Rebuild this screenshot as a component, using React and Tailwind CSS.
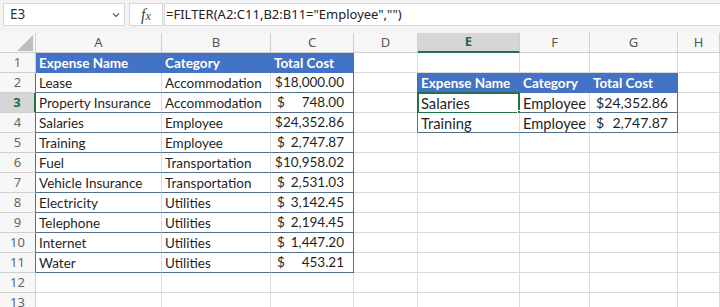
import React from "react";

const UI_FONT = "font-['Noto_Sans',sans-serif]";
const CELL_FONT = "font-['Lato',sans-serif]";

const GRID = "border-[#dadada]";

const COLS = [
    { key: "A", w: "w-[126px]" },
    { key: "B", w: "w-[109px]" },
    { key: "C", w: "w-[83px]" },
    { key: "D", w: "w-[64px]" },
    { key: "E", w: "w-[102px]" },
    { key: "F", w: "w-[70px]" },
    { key: "G", w: "w-[88px]" },
    { key: "H", w: "flex-1" },
];

const expenses = [
    ["Lease", "Accommodation", ["$18,000.00", ""]],
    ["Property Insurance", "Accommodation", ["748.00", "$"]],
    ["Salaries", "Employee", ["$24,352.86", ""]],
    ["Training", "Employee", ["2,747.87", "$"]],
    ["Fuel", "Transportation", ["$10,958.02", ""]],
    ["Vehicle Insurance", "Transportation", ["2,531.03", "$"]],
    ["Electricity", "Utilities", ["3,142.45", "$"]],
    ["Telephone", "Utilities", ["2,194.45", "$"]],
    ["Internet", "Utilities", ["1,447.20", "$"]],
    ["Water", "Utilities", ["453.21", "$"]],
];

const filtered = [
    ["Salaries", "Employee", ["$24,352.86", ""]],
    ["Training", "Employee", ["2,747.87", "$"]],
];

// accounting format: "$" sits left, the amount sits right
const Money = ({ value, size }) =>
    value[1] ? (
        <div className={`flex h-full items-center justify-between pl-[6px] pr-[9px] ${size}`}>
            <span>{value[1]}</span>
            <span>{value[0]}</span>
        </div>
    ) : (
        <div className={`flex h-full items-center justify-end pl-[6px] pr-[9px] ${size}`}>
            <span>{value[0]}</span>
        </div>
    );

// which cell holds what, and how its borders look
const cellInfo = (row, key) => {
    const info = { content: null, header: false, big: false, rb: "", bb: "" };
    const t1 = ["A", "B", "C"].indexOf(key);
    const t2 = ["E", "F", "G"].indexOf(key);

    if (t1 >= 0 && row === 1) {
        info.header = true;
        info.content = ["Expense Name", "Category", "Total Cost"][t1];
        info.rb = t1 === 2 ? "border-r-[#52708a]" : "border-r-[#4472c4]";
        info.bb = "border-b-[#4472c4]";
    } else if (t1 >= 0 && row >= 2 && row <= 11) {
        const item = expenses[row - 2];
        info.content = t1 === 2 ? <Money value={item[2]} size="" /> : item[t1];
        info.rb = t1 === 2 ? "border-r-[#52708a]" : "";
        info.bb = "border-b-[#52708a]";
    }

    if (t2 >= 0 && row === 2) {
        info.header = true;
        info.content = ["Expense Name", "Category", "Total Cost"][t2];
        info.rb = t2 === 2 ? "border-r-[#52708a]" : "border-r-[#4472c4]";
        info.bb = "border-b-[#4472c4]";
    } else if (t2 >= 0 && (row === 3 || row === 4)) {
        const item = filtered[row - 3];
        info.big = true;
        info.content = t2 === 2 ? <Money value={item[2]} size="text-[14.1px]" /> : item[t2];
        info.rb = t2 === 2 ? "border-r-[#52708a]" : "";
        info.bb = "border-b-[#52708a]";
    }

    if (key === "D" && row >= 2 && row <= 4) info.rb = "border-r-[#52708a]";
    return info;
};

const FormulaBar = () => (
    <div className={`h-[33px] shrink-0 bg-[#f3f3f3] pt-[3px] pl-[3px] flex ${UI_FONT}`}>
        <div className="w-[122px] h-[23px] bg-white border border-[#d6d6d6] flex items-center justify-between pl-[6px] pr-[4px] text-[13.5px] text-[#333]">
            <span>E3</span>
            <svg width="8" height="6" viewBox="0 0 8 6" className="mt-[1px]">
                <path d="M1 1.5 L4 4.5 L7 1.5" fill="none" stroke="#555" strokeWidth="1.1" />
            </svg>
        </div>
        <div className="ml-[4px] w-[34px] h-[23px] bg-white border border-[#d6d6d6] flex items-center justify-center">
            <span className="font-['Liberation_Serif',serif] italic text-[16px] text-[#444] leading-none">
                f<span className="text-[12px]">x</span>
            </span>
        </div>
        <div className="ml-[1px] flex-1 h-[23px] bg-white border border-[#d6d6d6] border-r-0 flex items-center pl-[1px] text-[13px] text-[#222]">
            =FILTER(A2:C11,B2:B11="Employee","")
        </div>
    </div>
);

const ColumnHeaders = () => (
    <div className={`flex h-[20px] shrink-0 ${UI_FONT}`}>
        <div className="w-[36px] h-full bg-[#f7f7f7] border-r border-b border-[#cfcfcf] relative">
            <svg width="36" height="20" className="absolute left-0 top-0">
                <polygon points="33,2 33,18 17,18" fill="#bdbdbd" />
            </svg>
        </div>
        {COLS.map((col) =>
            col.key === "E" ? (
                <div
                    key={col.key}
                    className={`${col.w} h-full bg-[#d6d6d6] border-r border-[#cfcfcf] border-b-2 border-b-[#217346] flex items-center justify-center text-[13px] font-bold text-[#1e6b41]`}
                >
                    {col.key}
                </div>
            ) : (
                <div
                    key={col.key}
                    className={`${col.w} h-full bg-[#f7f7f7] border-r border-b border-[#cfcfcf] flex items-center justify-center text-[13px] text-[#555]`}
                >
                    {col.key}
                </div>
            )
        )}
    </div>
);

const Row = ({ row }) => (
    <div className="flex h-[20px] shrink-0">
        {row === 3 ? (
            <div className={`w-[36px] h-full bg-[#d6d6d6] border-b border-b-[#cfcfcf] border-r-2 border-r-[#217346] flex items-center justify-center text-[13px] font-bold text-[#1e6b41] ${UI_FONT}`}>
                {row}
            </div>
        ) : (
            <div
                className={`w-[36px] h-full bg-[#f7f7f7] border-b border-r border-[#cfcfcf] ${
                    row >= 2 && row <= 11 ? "border-r-[#52708a]" : ""
                } flex items-center justify-center text-[13px] text-[#666] ${UI_FONT}`}
            >
                {row}
            </div>
        )}
        {COLS.map((col) => {
            const info = cellInfo(row, col.key);
            const selected = row === 3 && col.key === "E";
            return (
                <div
                    key={col.key}
                    className={`${col.w} h-full border-r border-b ${GRID} ${info.rb} ${info.bb} ${
                        info.header ? "bg-[#4472c4] text-white font-bold" : "bg-white text-[#1f1f1f]"
                    } ${info.big ? "text-[14.7px]" : "text-[13.5px]"} relative whitespace-nowrap leading-[19px] ${CELL_FONT}`}
                >
                    {typeof info.content === "string" ? (
                        <div className="pl-[3px] pt-[1px] h-full flex items-center">{info.content}</div>
                    ) : (
                        info.content
                    )}
                    {selected && (
                        <>
                            <div className="absolute -left-[1px] -top-[1px] w-[103px] h-[22px] border-2 border-[#217346] pointer-events-none" />
                            <div className="absolute -right-[4px] -bottom-[4px] w-[6px] h-[6px] bg-[#217346] border border-white" />
                        </>
                    )}
                </div>
            );
        })}
    </div>
);

export default function App() {
    const rows = Array.from({ length: 13 }, (_, i) => i + 1);
    return (
        <div className="w-[720px] h-[307px] overflow-hidden bg-white flex flex-col">
            <FormulaBar />
            <ColumnHeaders />
            {rows.map((r) => (
                <Row key={r} row={r} />
            ))}
        </div>
    );
}
